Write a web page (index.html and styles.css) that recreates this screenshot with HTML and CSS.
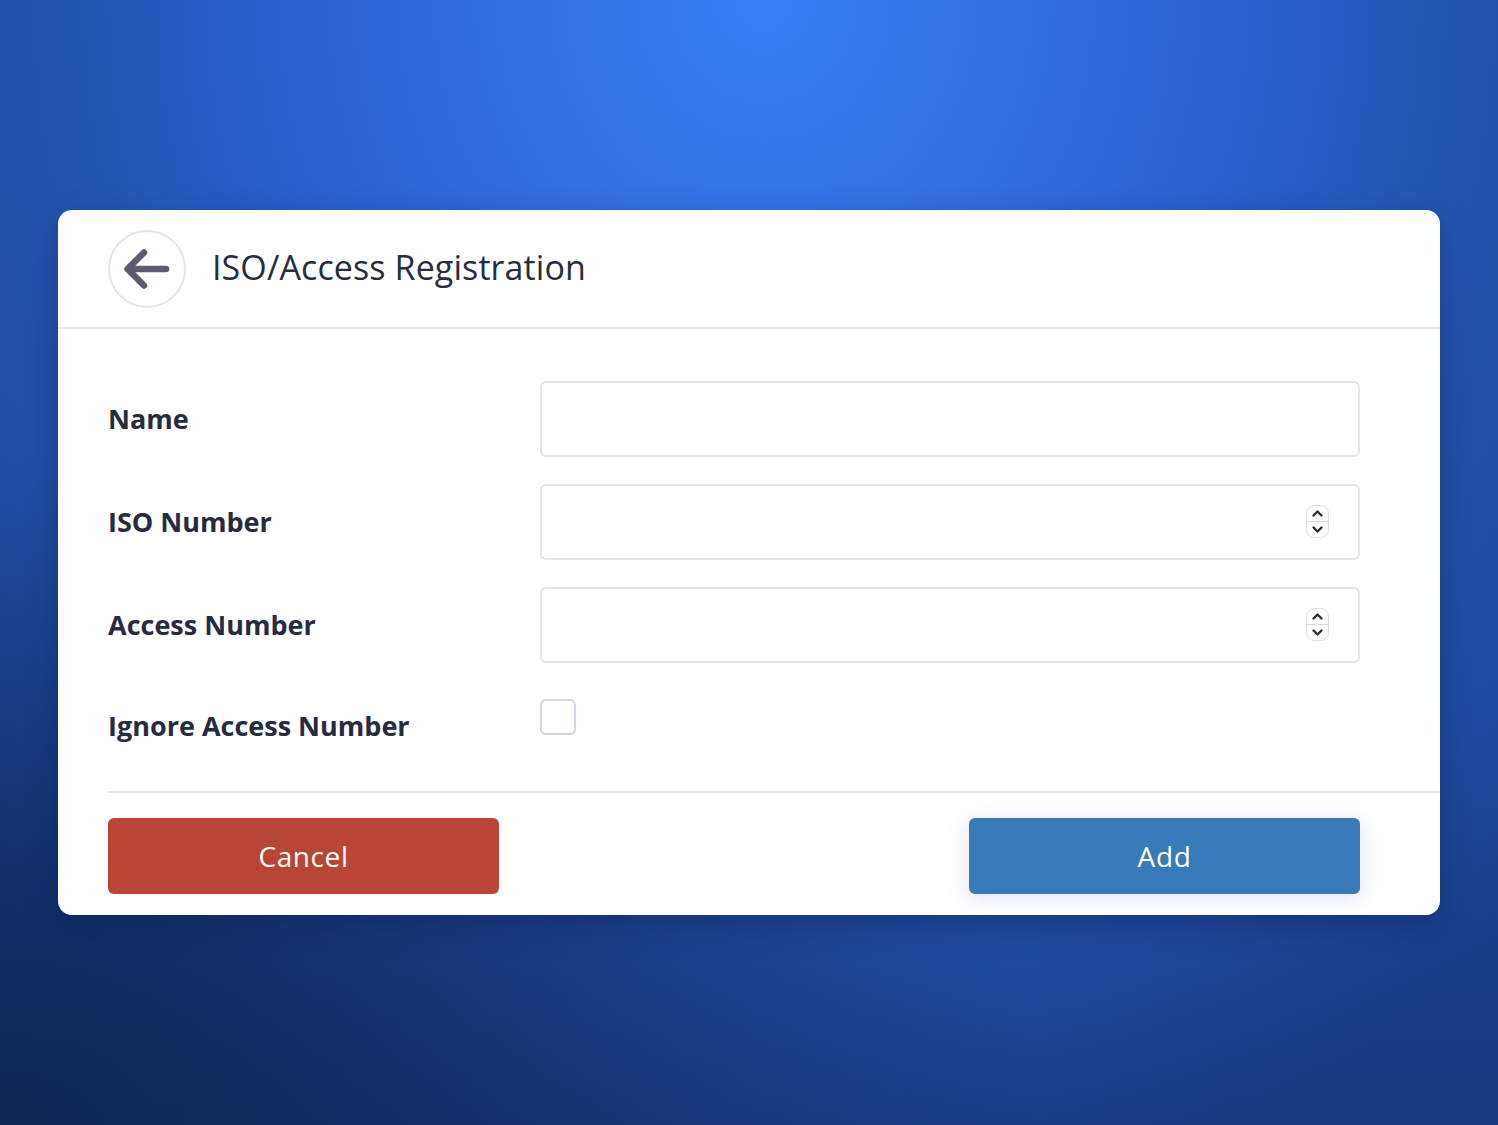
FILE: index.html
```html
<!DOCTYPE html>
<html lang="en">
<head>
<meta charset="utf-8">
<title>ISO/Access Registration</title>
<link rel="stylesheet" href="styles.css">
</head>
<body>
<main class="page">
  <section class="card">
    <header class="card-header">
      <button class="back-btn" type="button" aria-label="Back">
        <svg width="52" height="52" viewBox="0 0 52 52" fill="none">
          <path d="M45 26 H7 M23 9.5 L6.5 26 L23 42.5" stroke="#5b5c6f" stroke-width="6.5" stroke-linecap="round" stroke-linejoin="round"/>
        </svg>
      </button>
      <h1 class="title">ISO/Access Registration</h1>
    </header>
    <div class="card-body">
      <form class="form">
        <label class="label" for="name">Name</label>
        <input class="field" id="name" type="text">
        <label class="label" for="iso">ISO Number</label>
        <div class="num-wrap">
          <input class="field" id="iso" type="number">
          <span class="spinner" aria-hidden="true">
            <svg width="23" height="33" viewBox="0 0 23 33" fill="none">
              <rect x="0.5" y="0.5" width="22" height="32" rx="8" fill="#fff" stroke="#dcdde2"/>
              <line x1="1" y1="16.5" x2="22" y2="16.5" stroke="#dcdde2"/>
              <path d="M7.5 10.5 L11.5 6.5 L15.5 10.5" stroke="#2b2d36" stroke-width="2.4" stroke-linecap="round" stroke-linejoin="round"/>
              <path d="M7.5 22.5 L11.5 26.5 L15.5 22.5" stroke="#2b2d36" stroke-width="2.4" stroke-linecap="round" stroke-linejoin="round"/>
            </svg>
          </span>
        </div>
        <label class="label" for="access">Access Number</label>
        <div class="num-wrap">
          <input class="field" id="access" type="number">
          <span class="spinner" aria-hidden="true">
            <svg width="23" height="33" viewBox="0 0 23 33" fill="none">
              <rect x="0.5" y="0.5" width="22" height="32" rx="8" fill="#fff" stroke="#dcdde2"/>
              <line x1="1" y1="16.5" x2="22" y2="16.5" stroke="#dcdde2"/>
              <path d="M7.5 10.5 L11.5 6.5 L15.5 10.5" stroke="#2b2d36" stroke-width="2.4" stroke-linecap="round" stroke-linejoin="round"/>
              <path d="M7.5 22.5 L11.5 26.5 L15.5 22.5" stroke="#2b2d36" stroke-width="2.4" stroke-linecap="round" stroke-linejoin="round"/>
            </svg>
          </span>
        </div>
        <label class="label label-check" for="ignore">Ignore Access Number</label>
        <div class="check-cell"><input class="check" id="ignore" type="checkbox"></div>
      </form>
      <hr class="divider">
      <div class="actions">
        <button class="btn btn-cancel" type="button">Cancel</button>
        <button class="btn btn-add" type="button">Add</button>
      </div>
    </div>
  </section>
</main>
</body>
</html>
```
FILE: styles.css
```css
* { box-sizing: border-box; }
html, body { margin: 0; padding: 0; height: 100%; }
body {
  font-family: "Open Sans", "DejaVu Sans", sans-serif;
  background:
    radial-gradient(ellipse 75% 110% at 51% 0%, #3a80f7 0%, #2d66d8 35%, #2150a8 70%, rgba(33,80,168,0) 100%),
    linear-gradient(180deg, #214fa6 0%, #1c4596 60%, #173a80 100%);
  overflow: hidden;
}
.page {
  position: relative;
  height: 1125px;
  padding-top: 210px;
  background: radial-gradient(ellipse 70% 60% at 0% 100%, rgba(12,30,70,0.75) 0%, rgba(12,30,70,0) 100%);
}
.card {
  margin: 0 58px;
  background: #fff;
  border-radius: 14px;
  box-shadow: 0 10px 30px rgba(10, 25, 70, 0.35);
  overflow: hidden;
}
.card-header {
  display: flex;
  align-items: center;
  height: 119px;
  padding: 0 50px;
  border-bottom: 2px solid #e9eaee;
}
.back-btn {
  width: 78px;
  height: 78px;
  border-radius: 50%;
  border: 2px solid #e3e5ea;
  background: #fff;
  display: flex;
  align-items: center;
  justify-content: center;
  padding: 0;
  margin-right: 26px;
  flex-shrink: 0;
}
.title {
  margin: 0 0 3px;
  font-size: 34px;
  font-weight: 400;
  color: #272c3f;
  letter-spacing: 0.1px;
}
.card-body {
  padding: 52px 80px 21px 50px;
}
.form {
  display: grid;
  grid-template-columns: 432px 1fr;
  row-gap: 27px;
  align-items: center;
}
.label {
  font-size: 27px;
  font-weight: 700;
  color: #262b3f;
  line-height: 38px;
}
.num-wrap { position: relative; }
.field {
  display: block;
  height: 76px;
  width: 100%;
  border: 2px solid #e3e5ea;
  border-radius: 6px;
  padding: 0 26px;
  font-size: 22px;
  font-family: inherit;
  color: #262b3f;
  background: #fff;
  outline: none;
}
.field[type=number] { -moz-appearance: textfield; }
.field[type=number]::-webkit-inner-spin-button,
.field[type=number]::-webkit-outer-spin-button { -webkit-appearance: none; margin: 0; }
.spinner {
  position: absolute;
  right: 31px;
  top: 21px;
  width: 23px;
  height: 33px;
  pointer-events: none;
}
.spinner svg { display: block; }
.label-check { align-self: start; margin-top: 17px; }
.check-cell { align-self: start; padding-top: 9px; display: flex; }
.check {
  appearance: none;
  -webkit-appearance: none;
  width: 36px;
  height: 36px;
  margin: 0;
  border: 2px solid #d3d6e2;
  border-radius: 6px;
  background: #fff;
}
.divider {
  border: 0;
  border-top: 2px solid #e6e7ea;
  margin: 46px -80px 0 0;
}
.actions {
  display: flex;
  justify-content: space-between;
  margin-top: 25px;
}
.btn {
  width: 391px;
  height: 76px;
  border: 0;
  border-radius: 6px;
  color: #fff;
  font-family: inherit;
  font-size: 28px;
  font-weight: 400;
  letter-spacing: 0.6px;
}
.btn-cancel { background: #b94535; }
.btn-add { background: #377bb9; box-shadow: 0 4px 24px rgba(70, 110, 220, 0.18); }
```
